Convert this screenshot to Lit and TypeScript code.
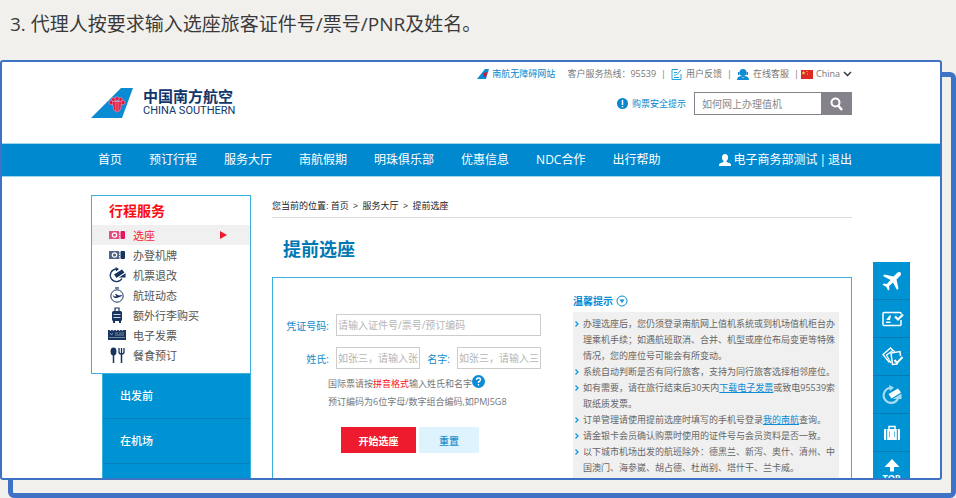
import { LitElement, html, css, svg } from "lit";
import { customElement } from "lit/decorators.js";
import { classMap } from "lit/directives/class-map.js";

const tail = svg`
  <path d="M0 30 30 0h12L31 30Z" fill="#0a8bd3"/>
  <g fill="#e2113c" stroke="#f3b9cb" stroke-width=".5">
    <ellipse cx="20.500" cy="14.500" rx="2.500" ry="2.200"/>
    <ellipse cx="31.500" cy="14.500" rx="2.500" ry="2.200"/>
    <circle cx="22.500" cy="11.500" r="1.900"/>
    <circle cx="29.500" cy="11.500" r="1.900"/>
    <circle cx="26" cy="10.800" r="2"/>
    <path d="M21.500 13.500h9l-1 8q-3.500 5-7 0Z"/>
    <path d="M24.300 13v10M26 12.500v11M27.800 13v10" fill="none"/>
  </g>`;

const miniTail = svg`
  <path d="M0 10 8 0h4L9 10Z" fill="#0a8bd3"/>
  <path d="m6 4 4-1-1 5-3-1Z" fill="#e2113c"/>`;

const sideIcons = {
  seat: svg`
    <path d="M0 4h11v8H0Z" fill="currentColor" opacity=".75"/>
    <path d="M12 4h3.500l.5 1v6l-.5 1H12l-.5-1V5Z" fill="currentColor"/>
    <circle cx="5.500" cy="8" r="2.200" fill="none" stroke="#fff" stroke-width="1.200"/>
    <path d="M10.500 4v8" stroke="#fff" stroke-dasharray="1.500 1"/>`,
  refund: svg`
    <path d="M7 2A6.300 6.300 0 1 0 13 11.500" fill="none" stroke="currentColor" stroke-width="1.300"/>
    <path d="M6.500 0 10 2 7 4.500Z" fill="currentColor"/>
    <path d="m5 7.500 8-5 2.500 3L7.500 11Z" fill="currentColor"/>
    <path d="m9 11 7.500-5v4.500H10Z" fill="currentColor"/>
    <path d="m8 11.300 8-5.300" stroke="#fff" stroke-width=".6"/>`,
  status: svg`
    <circle cx="8" cy="9" r="6.200" fill="none" stroke="currentColor"/>
    <path d="M6 0h4v2H6Z" fill="currentColor" opacity=".6"/>
    <path d="m3.500 8.500 1 0 1 1 2-.3L6 7h1l3 1.500 2.500-.5.500 1-5 2H5.500Z" fill="currentColor"/>`,
  bag: svg`
    <path d="M6 4V1h4v3" fill="none" stroke="currentColor" stroke-width="1.200"/>
    <rect x="3" y="4" width="10" height="10" rx="1.500" fill="currentColor"/>
    <path d="M4 14h2v2H4ZM10 14h2v2h-2Z" fill="currentColor"/>
    <path d="M4.500 7.500h7M4.500 10.500h7" stroke="#fff" stroke-width=".8"/>`,
  invoice: svg`
    <path d="M-1 3h1.500l1 1 1-1h1l1 1 1-1h1l1 1 1-1h1l1 1 1-1h1l1 1 1-1H17v10H-1Z" fill="currentColor"/>
    <path d="m1 6 1.500 2L4 6M6 6h3M10 6h5M6 8h9M0 10.500h16" fill="none" stroke="#fff" stroke-width=".6" opacity=".7"/>`,
  meal: svg`
    <ellipse cx="4.500" cy="4.500" rx="3" ry="4" fill="currentColor"/>
    <path d="M4.500 8v8M12.500 6v10" stroke="currentColor" stroke-width="1.500"/>
    <path d="M10 1v4q0 2 2.500 2T15 5V1M12.500 1v5" fill="none" stroke="currentColor" stroke-width="1.300"/>`,
};

const dockIcons = {
  plane: svg`<path d="M19.500 2.500c1 1 .5 2.500-.5 3.500l-3.500 3.500 2 9-1.500 1.500-4-7.500-4 3.700.5 3-1.300 1.300-2-3.700-3.700-2L2.800 13.500l3 .5 3.700-4L2 6l1.500-1.500 9 2L16 3c1-1 2.500-1.500 3.500-.5Z" fill="#fff"/>`,
  card: svg`
    <path d="M20 6V5.500q0-1-1-1H3q-1 0-1 1v11q0 1 1 1h16q1 0 1-1V12" fill="none" stroke="#fff" stroke-width="1.500"/>
    <path d="m14 8.500 3 3L22 6.500" fill="none" stroke="#fff" stroke-width="2.200"/>
    <path d="m5 12 3.500-4.500H10L9 12ZM5 13.500h4.500V15H5Z" fill="#fff"/>`,
  tickets: svg`
    <path d="M8.500 16.500 2 8.500 9.500 2l2.500 2.500" fill="none" stroke="#fff" stroke-width="1.400"/>
    <path d="M10 17 5.500 9 12 4.500l2 1" fill="none" stroke="#fff" stroke-width="1.200"/>
    <path d="M19.500 10 19 5.500 10 7l1.500 11.500 5-.5" fill="none" stroke="#fff" stroke-width="1.500"/>
    <path d="m13.500 14 2.500 3 5.500-6" fill="none" stroke="#fff" stroke-width="2"/>`,
  change: svg`
    <path d="M9 4a7.500 7.500 0 1 0 8 10.500" fill="none" stroke="#a9dbf2" stroke-width="2.200"/>
    <path d="m8 1 5 2.500L9 7Z" fill="#a9dbf2"/>
    <path d="m7.500 10 9.500-5.500 3 4-9.500 6Z" fill="#fff"/>
    <path d="m12.500 14.500 8-5V15h-8Z" fill="#a9dbf2"/>`,
  luggage: svg`
    <path d="M8 7V4.500h6V7" fill="none" stroke="#fff" stroke-width="1.500"/>
    <path d="M4 7h1.200v11H4q-1 0-1-1V8q0-1 1-1ZM6.200 7h9.600v11H6.200ZM16.800 7H18q1 0 1 1v9q0 1-1 1h-1.200Z" fill="#fff"/>
    <path d="M8.500 9.500V15M13.500 9.500V15" stroke="#0093d3" stroke-width=".6"/>`,
  top: svg`<path d="m11 0 7.500 8H13v4.500H9V8H3.500Z" fill="#fff"/>`,
};

const navItems = ["首页", "预订行程", "服务大厅", "南航假期", "明珠俱乐部", "优惠信息", "NDC合作", "出行帮助"];

const services = [
  { label: "选座", icon: sideIcons.seat, active: true },
  { label: "办登机牌", icon: sideIcons.seat },
  { label: "机票退改", icon: sideIcons.refund },
  { label: "航班动态", icon: sideIcons.status },
  { label: "额外行李购买", icon: sideIcons.bag },
  { label: "电子发票", icon: sideIcons.invoice },
  { label: "餐食预订", icon: sideIcons.meal },
];

const dock = [
  { name: "航班", icon: dockIcons.plane },
  { name: "值机", icon: dockIcons.card },
  { name: "订单", icon: dockIcons.tickets },
  { name: "退改", icon: dockIcons.change },
  { name: "行李", icon: dockIcons.luggage },
];

const shared = css`
  :host {
    display: block;
    font-family: "Open Sans", "Noto Sans CJK SC", sans-serif;
  }
  * {
    box-sizing: border-box;
  }
  a {
    color: inherit;
    text-decoration: none;
  }
  svg {
    display: block;
    flex: none;
    overflow: visible;
  }
  ul {
    list-style: none;
    margin: 0;
    padding: 0;
  }
  button,
  input,
  select {
    font: inherit;
    border-radius: 0;
    margin: 0;
  }
`;

@customElement("site-header")
class SiteHeader extends LitElement {
  static styles = [
    shared,
    css`
      .wrap {
        max-width: 762px;
        padding-left: 1px;
        margin: 0 auto;
        display: flex;
        justify-content: space-between;
      }
      .top {
        height: 81px;
      }
      .logo {
        display: flex;
        gap: 10px;
        align-self: flex-start;
        margin-top: 26px;
        color: #10366c;
      }
      .cn {
        display: block;
        font-size: 15px;
        line-height: 17px;
        font-weight: 700;
      }
      .en {
        display: block;
        font-family: Roboto, sans-serif;
        font-size: 11px;
        line-height: 12px;
      }
      .tools {
        display: flex;
        flex-direction: column;
        align-items: flex-end;
        gap: 6px;
      }
      .links {
        display: flex;
        align-items: center;
        height: 24px;
        gap: 5px;
        font-size: 9px;
        line-height: 12px;
        color: #777;
      }
      .links a,
      .country {
        display: flex;
        align-items: center;
        gap: 3px;
      }
      .links .contact {
        gap: 4px;
      }
      .links .access {
        color: #0a86cc;
        margin-right: 7px;
      }
      .country {
        margin-left: -3px;
      }
      select {
        appearance: none;
        border: 0;
        padding: 0;
        background: none;
        color: inherit;
      }
      .search {
        display: flex;
        align-items: center;
        font-size: 9px;
      }
      .safety {
        display: flex;
        align-items: center;
        gap: 4px;
        color: #0a86cc;
        margin-right: 8px;
      }
      .query {
        width: 127px;
        height: 23px;
        border: 1px solid #85828c;
        border-right: 0;
        padding: 0 7px;
        font-size: 10px;
        background: #fff;
      }
      .query::placeholder {
        color: #888;
      }
      .go {
        width: 31px;
        height: 23px;
        padding: 0;
        border: 0;
        background: #85828c;
        display: grid;
        place-items: center;
      }
      nav {
        background: #0089cf;
        border-top: 1px solid #9fd6ef;
        border-bottom: 1px solid #9fd6ef;
        color: #fff;
        font-size: 12px;
        line-height: 32px;
      }
      .menu {
        display: flex;
        gap: 27px;
        padding-left: 7px;
      }
      .user {
        display: flex;
        align-items: center;
        gap: 2px;
      }
    `,
  ];

  render() {
    return html`
      <header class="wrap top">
        <a class="logo" href="#">
          <svg width="42" height="30" viewBox="0 0 42 30">${tail}</svg>
          <span><span class="cn">中国南方航空</span><span class="en">CHINA SOUTHERN</span></span>
        </a>
        <div class="tools">
          <div class="links">
            <a class="access" href="#"><svg width="12" height="10" viewBox="0 0 12 10">${miniTail}</svg>南航无障碍网站</a>
            <span>客户服务热线：95539</span><span>|</span>
            <a class="contact" href="#">
              <svg width="11" height="11" viewBox="0 0 11 11" fill="none" stroke="#21a5de">
                <path d="M7 .5H1v10h9V5M3 3.500h3M3 6h2M3 8.500h5M5.500 6 10 1"/></svg>用户反馈</a>
            <span>|</span>
            <a class="contact" href="#">
              <svg width="12" height="11" viewBox="0 0 12 11" fill="#0a8bd3">
                <circle cx="6" cy="3.500" r="3.500"/><path d="M0 11q0-3.500 4-4h4q4 .5 4 4ZM1 3h1.500v3H1ZM9.500 3H11v3H9.500Z"/>
                <path d="m4.500 8 1.500 1 1.500-1" stroke="#fff" fill="none" stroke-width=".5"/></svg>在线客服</a>
            <span>|</span>
            <label class="country">
              <svg width="12" height="9" viewBox="0 0 12 9"><path d="M0 0h12v9H0Z" fill="#dc2a25"/>
                <path d="m2.500 1 .6 1.300 1.300.1-1 .9.300 1.300-1.200-.7-1.200.7.300-1.300-1-.9 1.300-.1ZM5.500 1h1v1h-1ZM6 3.500h1v1H6Z" fill="#f8d648"/></svg>
              <select aria-label="国家"><option>China</option></select>
              <svg width="9" height="6" viewBox="0 0 9 6"><path d="m1 1 3.500 3.500L8 1" fill="none" stroke="#333" stroke-width="1.400"/></svg>
            </label>
          </div>
          <form class="search">
            <a class="safety" href="#">
              <svg width="11" height="11" viewBox="0 0 11 11"><circle cx="5.500" cy="5.500" r="5.500" fill="#0a86cc"/>
                <path d="M5.500 2v5M5.500 8v1.200" stroke="#fff" stroke-width="1.500"/></svg>购票安全提示</a>
            <input class="query" type="text" aria-label="搜索" placeholder="如何网上办理值机" />
            <button class="go" type="button" aria-label="搜索">
              <svg width="13" height="14" viewBox="0 0 13 14" fill="none" stroke="#fff"><circle cx="5.500" cy="5.500" r="4" stroke-width="2"/>
                <path d="m8.500 9 3.500 4" stroke-width="2.500"/></svg>
            </button>
          </form>
        </div>
      </header>
      <nav>
        <div class="wrap">
          <div class="menu">${navItems.map((item) => html`<a href="#">${item}</a>`)}</div>
          <div class="user">
            <svg width="12" height="12" viewBox="0 0 12 12" fill="#fff"><ellipse cx="6" cy="3.500" rx="3" ry="3.500"/>
              <path d="M4.500 6h3v2l4 1.500q.5.500.5 2.500H0q0-2 .5-2.500l4-1.500Z"/></svg>
            <a href="#">电子商务部测试</a><span>|</span><a href="#">退出</a>
          </div>
        </div>
      </nav>
    `;
  }
}

@customElement("service-menu")
class ServiceMenu extends LitElement {
  static styles = [
    shared,
    css`
      .box {
        border: 1px solid #3bb0dc;
        background: #fff;
        padding-bottom: 8px;
      }
      h2 {
        margin: 0;
        padding: 1px 17px;
        font-size: 14px;
        line-height: 27px;
        color: #fb0d14;
      }
      .item {
        display: flex;
        align-items: center;
        gap: 7px;
        height: 20px;
        padding: 0 23px 0 17px;
        font-size: 11px;
        color: #555;
      }
      .item svg {
        color: #17335f;
      }
      .item.active {
        background: #f0f0f0;
        color: #f0243c;
      }
      .item.active svg {
        color: #e6175c;
      }
      .item .arrow {
        margin-left: auto;
      }
      .stages {
        margin-left: 11px;
        padding-bottom: 44px;
        background: #0093d3;
        border: 1px solid #3bb0dc;
        border-top: 0;
        color: #fff;
        font-size: 11px;
        font-weight: 500;
        line-height: 44px;
      }
      .stages a {
        display: block;
        padding-left: 17px;
        border-bottom: 1px solid #0580bd;
      }
    `,
  ];

  render() {
    return html`
      <div class="box">
        <h2>行程服务</h2>
        <ul>
          ${services.map(
            (s) => html`<li>
              <a href="#" class=${classMap({ item: true, active: !!s.active })}>
                <svg width="17" height="16" viewBox="0 0 17 16">${s.icon}</svg>${s.label}
                ${s.active
                  ? html`<svg class="arrow" width="7" height="8" viewBox="0 0 7 8"><path d="M0 0 7 4 0 8Z" fill="#ee1b2e"/></svg>`
                  : ""}
              </a>
            </li>`
          )}
        </ul>
      </div>
      <div class="stages"><a href="#">出发前</a><a href="#">在机场</a></div>
    `;
  }
}

@customElement("seat-panel")
class SeatPanel extends LitElement {
  static styles = [
    shared,
    css`
      .crumbs {
        font-size: 9px;
        line-height: 22px;
        color: #222;
        border-bottom: 1px solid #ddd;
      }
      .crumbs span {
        margin: 0 2px;
      }
      h1 {
        margin: 0;
        padding: 11px 11px 0;
        font-size: 18px;
        line-height: 40px;
        color: #0078b3;
      }
      .panel {
        margin-top: 8px;
        border: 1px solid #3bb0dc;
        display: flex;
        justify-content: space-between;
        padding: 0 12px 20px;
      }
      form {
        padding-top: 36px;
        font-size: 10px;
      }
      .fields {
        display: grid;
        grid-template-columns: 46px 84px 27px 84px;
        gap: 11px 5px;
        align-items: center;
      }
      label {
        color: #1089cb;
        text-align: right;
        white-space: nowrap;
        padding-right: 2px;
      }
      input {
        width: 100%;
        height: 22px;
        border: 1px solid #ccc;
        padding: 0 1px;
        background: #fff;
      }
      input::placeholder {
        color: #b5b5b5;
      }
      .wide {
        grid-column: 2 / 5;
      }
      .notes {
        margin: 6px 0 16px 43px;
        font-size: 9px;
        line-height: 18px;
        color: #777;
      }
      .notes p {
        margin: 0;
        display: flex;
      }
      .notes em {
        font-style: normal;
        color: #fb0d14;
      }
      .help {
        width: 13px;
        height: 13px;
        padding: 0;
        border: 0;
        background: none;
      }
      .actions {
        display: flex;
        gap: 3px;
        margin-left: 56px;
      }
      .actions button {
        height: 26px;
        border: 0;
        padding: 0;
        font-weight: 700;
      }
      .actions .start {
        width: 75px;
        background: #ee1b2e;
        color: #fff;
      }
      .actions .reset {
        width: 60px;
        background: #def3fe;
        color: #1b90cc;
        font-weight: 500;
      }
      .tips {
        width: 266px;
        padding-top: 12px;
      }
      h3 {
        display: flex;
        align-items: center;
        gap: 3px;
        margin: 0;
        font-size: 10px;
        line-height: 22px;
        color: #0a8bd3;
      }
      .tips ul {
        background: #f0f0f0;
        padding: 4px 3px 8px 2px;
        font-size: 9px;
        line-height: 16px;
        color: #666;
      }
      .tips li {
        display: flex;
        gap: 4px;
      }
      .tips li svg {
        margin-top: 5px;
      }
      .tips a {
        color: #0a8bd3;
        text-decoration: underline;
      }
    `,
  ];

  render() {
    const tips = [
      "办理选座后，您仍须登录南航网上值机系统或到机场值机柜台办理乘机手续；如遇航班取消、合并、机型或座位布局变更等特殊情况，您的座位号可能会有所变动。",
      "系统自动判断是否有同行旅客，支持为同行旅客选择相邻座位。",
      html`如有需要，请在旅行结束后30天内<a href="#">下载电子发票</a>或致电95539索取纸质发票。`,
      html`订单管理请使用提前选座时填写的手机号登录<a href="#">我的南航</a>查询。`,
      "请金银卡会员确认购票时使用的证件号与会员资料是否一致。",
      "以下城市机场出发的航班除外：德黑兰、新泻、奥什、清州、中国澳门、海参崴、胡占德、杜尚别、塔什干、兰卡威。",
    ];
    return html`
      <div class="crumbs">
        您当前的位置: <a href="#">首页</a> <span>&gt;</span> <a href="#">服务大厅</a> <span>&gt;</span> <a href="#">提前选座</a>
      </div>
      <h1>提前选座</h1>
      <div class="panel">
        <form>
          <div class="fields">
            <label for="cert">凭证号码:</label>
            <input id="cert" class="wide" type="text" placeholder="请输入证件号/票号/预订编码" />
            <label for="family">姓氏:</label>
            <input id="family" type="text" placeholder="如张三，请输入张" />
            <label for="given">名字:</label>
            <input id="given" type="text" placeholder="如张三，请输入三" />
          </div>
          <div class="notes">
            <p>国际票请按<em>拼音格式</em>输入姓氏和名字<button class="help" type="button" aria-label="帮助">
              <svg width="13" height="13" viewBox="0 0 13 13"><circle cx="6.500" cy="6.500" r="6.500" fill="#0a8bd3"/>
                <path d="M4.500 5q0-2 2-2t2 1.700Q8.500 6 6.500 7v1M6.500 9v1.500" fill="none" stroke="#fff" stroke-width="1.400"/></svg>
            </button></p>
            <p>预订编码为6位字母/数字组合编码,如PMJ5G8</p>
          </div>
          <div class="actions">
            <button class="start" type="button">开始选座</button>
            <button class="reset" type="reset">重置</button>
          </div>
        </form>
        <section class="tips">
          <h3>温馨提示
            <svg width="12" height="12" viewBox="0 0 12 12"><circle cx="6" cy="6" r="5" fill="none" stroke="#0a8bd3"/>
              <path d="M3.500 4.500h5L6 8Z" fill="#0a8bd3"/></svg>
          </h3>
          <ul>
            ${tips.map(
              (t) => html`<li>
                <svg width="4" height="6" viewBox="0 0 4 6"><path d="m.5.500 2.500 2.500L.5 5.500" fill="none" stroke="#0a9bdc" stroke-width="1.300"/></svg>
                <span>${t}</span>
              </li>`
            )}
          </ul>
        </section>
      </div>
    `;
  }
}

@customElement("quick-dock")
class QuickDock extends LitElement {
  static styles = [
    shared,
    css`
      a {
        display: flex;
        flex-direction: column;
        align-items: center;
        justify-content: center;
        width: 37px;
        height: 38px;
        background: #0093d3;
        border-bottom: 1px solid #067cb6;
        color: #fff;
        font-size: 9px;
        line-height: 10px;
        font-weight: 700;
      }
      .top {
        justify-content: flex-start;
        padding-top: 7px;
      }
    `,
  ];

  render() {
    return html`
      ${dock.map((d) => html`<a href="#" aria-label=${d.name}><svg width="22" height="22" viewBox="0 0 22 22">${d.icon}</svg></a>`)}
      <a class="top" href="#"><svg width="22" height="14" viewBox="0 0 22 14">${dockIcons.top}</svg>TOP</a>
    `;
  }
}

@customElement("app-root")
class AppRoot extends LitElement {
  static styles = [
    shared,
    css`
      .page {
        display: flex;
        flex-direction: column;
        height: 100vh;
        background: #f2f0ed;
      }
      .step {
        margin: 0;
        padding: 0 10px 12px;
        font-size: 19px;
        line-height: 48px;
        font-weight: 400;
        color: #3a3a3a;
      }
      .stage {
        position: relative;
        flex: 1;
        min-height: 0;
        padding: 0 14px 18px 0;
        display: grid;
      }
      .stage::before {
        content: "";
        position: absolute;
        inset: 12px 0 0 8px;
        border: 5px solid #3d72c4;
        border-radius: 6px;
      }
      .card {
        position: relative;
        min-height: 0;
        overflow: hidden;
        background: #fff;
        border: 2px solid #3d72c4;
        border-radius: 3px;
      }
      .body {
        max-width: 762px;
        margin: 0 auto;
        padding: 18px 0 0 1px;
        display: flex;
        gap: 21px;
        align-items: flex-start;
      }
      service-menu {
        width: 160px;
        flex: none;
      }
      seat-panel {
        flex: 1;
        min-width: 0;
      }
      quick-dock {
        position: absolute;
        top: 200px;
        right: 30px;
      }
    `,
  ];

  render() {
    return html`
      <div class="page">
        <p class="step">3. 代理人按要求输入选座旅客证件号/票号/PNR及姓名。</p>
        <div class="stage">
          <div class="card">
            <site-header></site-header>
            <main class="body">
              <service-menu></service-menu>
              <seat-panel></seat-panel>
            </main>
            <quick-dock></quick-dock>
          </div>
        </div>
      </div>
    `;
  }
}
